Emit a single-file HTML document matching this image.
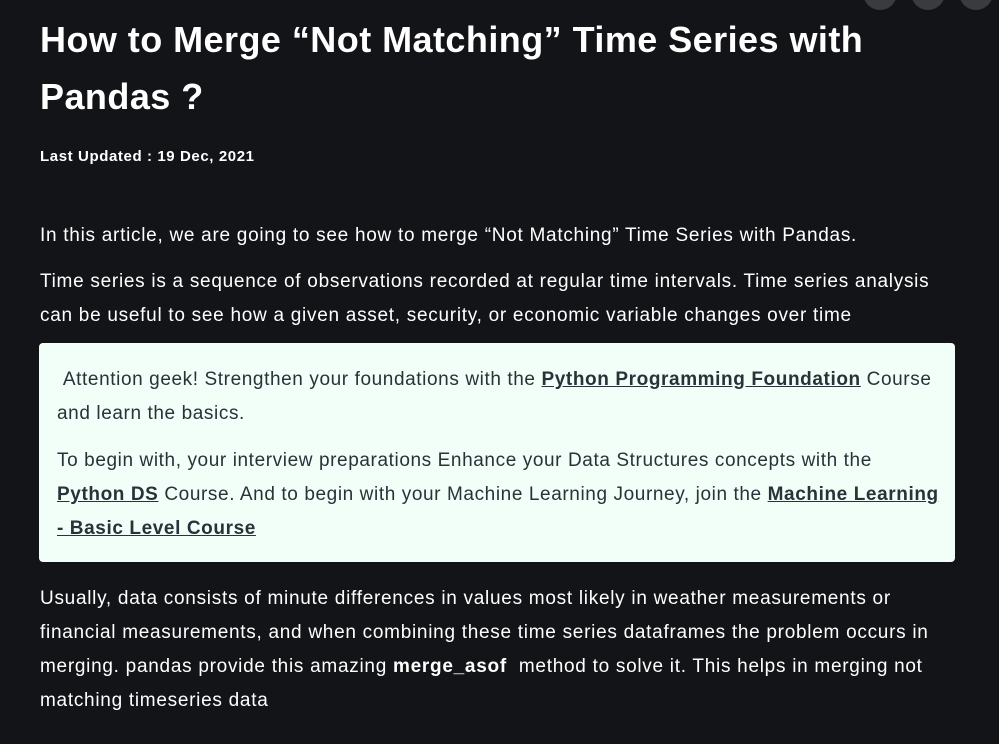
<!DOCTYPE html>
<html><head><meta charset="utf-8"><style>
html,body{margin:0;padding:0;background:#131417;width:999px;height:744px;overflow:hidden;font-family:"Liberation Sans",sans-serif;}
.c{position:absolute;top:-24px;width:34px;height:34px;border-radius:50%;background:#3a3b3f;}
.l{position:absolute;white-space:nowrap;left:40px;}
h1{margin:0;position:absolute;left:40px;font-size:36px;font-weight:bold;color:#fff;white-space:nowrap;letter-spacing:0.45px}
.t{color:#fff;font-size:19px;letter-spacing:0.72px}
.b{color:#273239;font-size:19px;letter-spacing:0.6px;left:57px}
.b a{color:#273239;font-weight:bold;text-decoration:underline;}
.box{position:absolute;left:39px;top:343px;width:916px;height:219px;background:#f1fff8;border-radius:4px}
</style></head><body>
<div class="c" style="left:863px"></div><div class="c" style="left:911px"></div><div class="c" style="left:959px"></div>
<h1 style="top:19px">How to Merge “Not Matching” Time Series with</h1>
<h1 style="top:76px">Pandas ?</h1>
<div class="l" style="top:148px;color:#fff;font-size:15px;font-weight:bold;letter-spacing:0.6px">Last Updated : 19 Dec, 2021</div>
<div class="l t" style="top:225px">In this article, we are going to see how to merge “Not Matching” Time Series with Pandas.</div>
<div class="l t" style="top:271px">Time series is a sequence of observations recorded at regular time intervals. Time series analysis</div>
<div class="l t" style="top:305px">can be useful to see how a given asset, security, or economic variable changes over time</div>
<div class="box"></div>
<div class="l b" style="top:369px">&nbsp;Attention geek! Strengthen your foundations with the <a>Python Programming Foundation</a> Course</div>
<div class="l b" style="top:403px">and learn the basics.</div>
<div class="l b" style="top:450px">To begin with, your interview preparations Enhance your Data Structures concepts with the</div>
<div class="l b" style="top:484px"><a>Python DS</a> Course. And to begin with your Machine Learning Journey, join the <a>Machine Learning</a></div>
<div class="l b" style="top:518px"><a>- Basic Level Course</a></div>
<div class="l t" style="top:588px">Usually, data consists of minute differences in values most likely in weather measurements or</div>
<div class="l t" style="top:622px">financial measurements, and when combining these time series dataframes the problem occurs in</div>
<div class="l t" style="top:656px">merging. pandas provide this amazing <b>merge_asof</b>&nbsp; method to solve it. This helps in merging not</div>
<div class="l t" style="top:690px">matching timeseries data</div>
</body></html>
